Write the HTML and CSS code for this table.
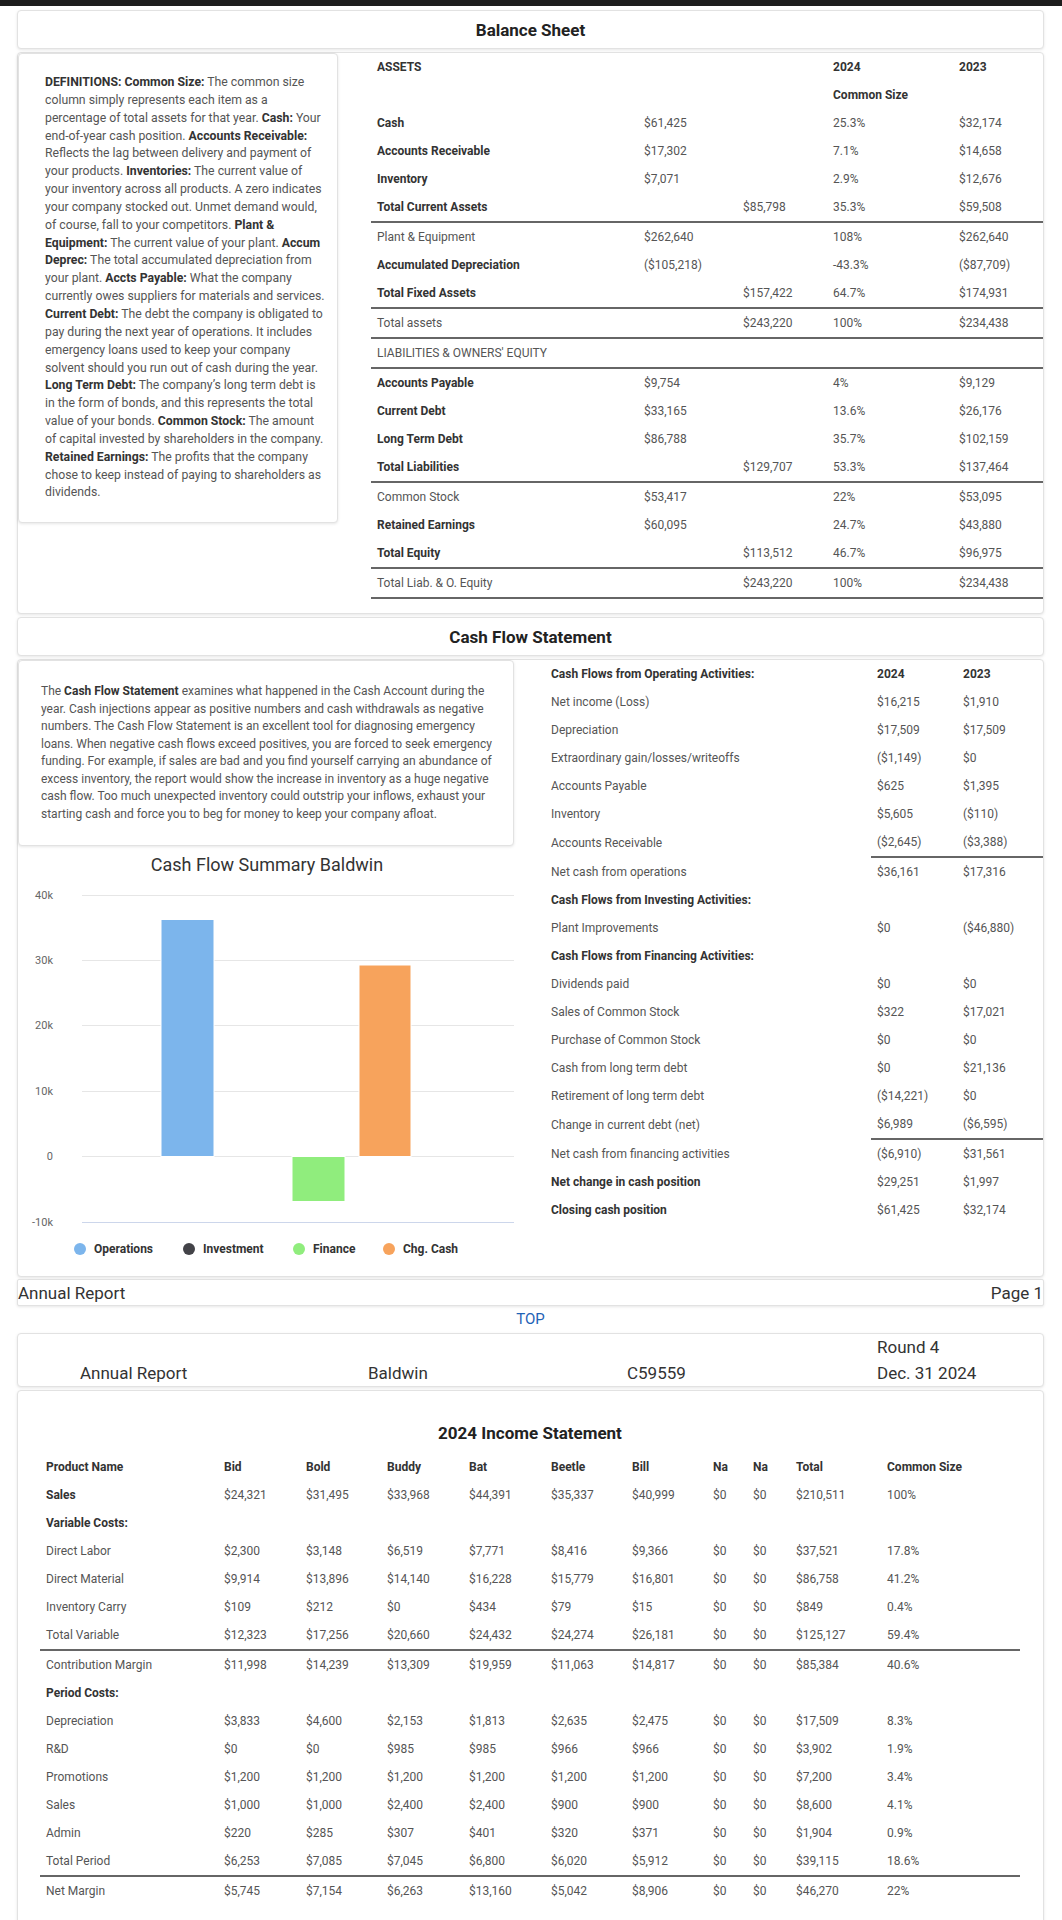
FILE: index.html
```html
<!DOCTYPE html>
<html lang="en">
<head>
<meta charset="utf-8">
<title>Annual Report - Baldwin</title>
<link rel="stylesheet" href="styles.css">
</head>
<body>
<div class="topbar"></div>
<div class="page">
  <div class="card titlecard first">Balance Sheet</div>
  <div class="card outer bs-outer">
    <div class="card defs">
      <b>DEFINITIONS: Common Size:</b> The common size<br>
      column simply represents each item as a<br>
      percentage of total assets for that year. <b>Cash:</b> Your<br>
      end-of-year cash position. <b>Accounts Receivable:</b><br>
      Reflects the lag between delivery and payment of<br>
      your products. <b>Inventories:</b> The current value of<br>
      your inventory across all products. A zero indicates<br>
      your company stocked out. Unmet demand would,<br>
      of course, fall to your competitors. <b>Plant &amp;</b><br>
      <b>Equipment:</b> The current value of your plant. <b>Accum</b><br>
      <b>Deprec:</b> The total accumulated depreciation from<br>
      your plant. <b>Accts Payable:</b> What the company<br>
      currently owes suppliers for materials and services.<br>
      <b>Current Debt:</b> The debt the company is obligated to<br>
      pay during the next year of operations. It includes<br>
      emergency loans used to keep your company<br>
      solvent should you run out of cash during the year.<br>
      <b>Long Term Debt:</b> The company’s long term debt is<br>
      in the form of bonds, and this represents the total<br>
      value of your bonds. <b>Common Stock:</b> The amount<br>
      of capital invested by shareholders in the company.<br>
      <b>Retained Earnings:</b> The profits that the company<br>
      chose to keep instead of paying to shareholders as<br>
      dividends.
    </div>
    <table class="fin bs">
      <colgroup><col class="c1"><col class="c2"><col class="c3"><col class="c4"><col class="c5"></colgroup>
      <tr class="b"><td>ASSETS</td><td></td><td></td><td>2024</td><td>2023</td></tr>
      <tr class="b"><td></td><td></td><td></td><td>Common Size</td><td></td></tr>
      <tr><td class="b">Cash</td><td>$61,425</td><td></td><td>25.3%</td><td>$32,174</td></tr>
      <tr><td class="b">Accounts Receivable</td><td>$17,302</td><td></td><td>7.1%</td><td>$14,658</td></tr>
      <tr><td class="b">Inventory</td><td>$7,071</td><td></td><td>2.9%</td><td>$12,676</td></tr>
      <tr class="sep"><td class="b">Total Current Assets</td><td></td><td>$85,798</td><td>35.3%</td><td>$59,508</td></tr>
      <tr><td>Plant &amp; Equipment</td><td>$262,640</td><td></td><td>108%</td><td>$262,640</td></tr>
      <tr><td class="b">Accumulated Depreciation</td><td>($105,218)</td><td></td><td>-43.3%</td><td>($87,709)</td></tr>
      <tr class="sep"><td class="b">Total Fixed Assets</td><td></td><td>$157,422</td><td>64.7%</td><td>$174,931</td></tr>
      <tr class="sep"><td>Total assets</td><td></td><td>$243,220</td><td>100%</td><td>$234,438</td></tr>
      <tr class="sep"><td>LIABILITIES &amp; OWNERS' EQUITY</td><td></td><td></td><td></td><td></td></tr>
      <tr><td class="b">Accounts Payable</td><td>$9,754</td><td></td><td>4%</td><td>$9,129</td></tr>
      <tr><td class="b">Current Debt</td><td>$33,165</td><td></td><td>13.6%</td><td>$26,176</td></tr>
      <tr><td class="b">Long Term Debt</td><td>$86,788</td><td></td><td>35.7%</td><td>$102,159</td></tr>
      <tr class="sep"><td class="b">Total Liabilities</td><td></td><td>$129,707</td><td>53.3%</td><td>$137,464</td></tr>
      <tr><td>Common Stock</td><td>$53,417</td><td></td><td>22%</td><td>$53,095</td></tr>
      <tr><td class="b">Retained Earnings</td><td>$60,095</td><td></td><td>24.7%</td><td>$43,880</td></tr>
      <tr class="sep"><td class="b">Total Equity</td><td></td><td>$113,512</td><td>46.7%</td><td>$96,975</td></tr>
      <tr class="sep"><td>Total Liab. &amp; O. Equity</td><td></td><td>$243,220</td><td>100%</td><td>$234,438</td></tr>
    </table>
  </div>

  <div class="card titlecard">Cash Flow Statement</div>
  <div class="card outer cf-outer">
    <div class="cf-left">
      <div class="card cftext">
        The <b>Cash Flow Statement</b> examines what happened in the Cash Account during the<br>
        year. Cash injections appear as positive numbers and cash withdrawals as negative<br>
        numbers. The Cash Flow Statement is an excellent tool for diagnosing emergency<br>
        loans. When negative cash flows exceed positives, you are forced to seek emergency<br>
        funding. For example, if sales are bad and you find yourself carrying an abundance of<br>
        excess inventory, the report would show the increase in inventory as a huge negative<br>
        cash flow. Too much unexpected inventory could outstrip your inflows, exhaust your<br>
        starting cash and force you to beg for money to keep your company afloat.
      </div>
      <svg class="chart" width="496" height="425" viewBox="0 0 496 425">
        <text x="249" y="20" text-anchor="middle" class="ch-title">Cash Flow Summary Baldwin</text>
        <g stroke="#e6e6e6" stroke-width="1">
          <line x1="64" x2="604" y1="44.5" y2="44.5"/>
          <line x1="64" x2="604" y1="109.5" y2="109.5"/>
          <line x1="64" x2="604" y1="174.5" y2="174.5"/>
          <line x1="64" x2="604" y1="240.5" y2="240.5"/>
          <line x1="64" x2="604" y1="305.5" y2="305.5"/>
        </g>
        <line x1="64" x2="604" y1="371.5" y2="371.5" stroke="#ccd6eb" stroke-width="1"/>
        <g class="ax" text-anchor="end">
          <text x="35" y="48">40k</text>
          <text x="35" y="113">30k</text>
          <text x="35" y="178">20k</text>
          <text x="35" y="244">10k</text>
          <text x="35" y="309">0</text>
          <text x="35" y="375">-10k</text>
        </g>
        <rect x="143" y="68.5" width="53" height="237" fill="#7cb5ec" stroke="#fff" stroke-width="1"/>
        <rect x="274" y="305.5" width="53" height="45" fill="#90ed7d" stroke="#fff" stroke-width="1"/>
        <rect x="341" y="114" width="52" height="191.5" fill="#f7a35c" stroke="#fff" stroke-width="1"/>
        <g class="lg">
          <circle cx="62" cy="398" r="6" fill="#7cb5ec"/>
          <text x="76" y="402">Operations</text>
          <circle cx="171" cy="398" r="6" fill="#434348"/>
          <text x="185" y="402">Investment</text>
          <circle cx="281" cy="398" r="6" fill="#90ed7d"/>
          <text x="295" y="402">Finance</text>
          <circle cx="371" cy="398" r="6" fill="#f7a35c"/>
          <text x="385" y="402">Chg. Cash</text>
        </g>
      </svg>
    </div>
    <table class="fin cf">
      <colgroup><col class="d1"><col class="d2"><col class="d3"></colgroup>
      <tr class="b"><td>Cash Flows from Operating Activities:</td><td>2024</td><td>2023</td></tr>
      <tr><td>Net income (Loss)</td><td>$16,215</td><td>$1,910</td></tr>
      <tr><td>Depreciation</td><td>$17,509</td><td>$17,509</td></tr>
      <tr><td>Extraordinary gain/losses/writeoffs</td><td>($1,149)</td><td>$0</td></tr>
      <tr><td>Accounts Payable</td><td>$625</td><td>$1,395</td></tr>
      <tr><td>Inventory</td><td>$5,605</td><td>($110)</td></tr>
      <tr class="vsep"><td>Accounts Receivable</td><td>($2,645)</td><td>($3,388)</td></tr>
      <tr><td>Net cash from operations</td><td>$36,161</td><td>$17,316</td></tr>
      <tr><td class="b">Cash Flows from Investing Activities:</td><td></td><td></td></tr>
      <tr><td>Plant Improvements</td><td>$0</td><td>($46,880)</td></tr>
      <tr><td class="b">Cash Flows from Financing Activities:</td><td></td><td></td></tr>
      <tr><td>Dividends paid</td><td>$0</td><td>$0</td></tr>
      <tr><td>Sales of Common Stock</td><td>$322</td><td>$17,021</td></tr>
      <tr><td>Purchase of Common Stock</td><td>$0</td><td>$0</td></tr>
      <tr><td>Cash from long term debt</td><td>$0</td><td>$21,136</td></tr>
      <tr><td>Retirement of long term debt</td><td>($14,221)</td><td>$0</td></tr>
      <tr class="vsep"><td>Change in current debt (net)</td><td>$6,989</td><td>($6,595)</td></tr>
      <tr><td>Net cash from financing activities</td><td>($6,910)</td><td>$31,561</td></tr>
      <tr><td class="b">Net change in cash position</td><td>$29,251</td><td>$1,997</td></tr>
      <tr><td class="b">Closing cash position</td><td>$61,425</td><td>$32,174</td></tr>
    </table>
  </div>

  <div class="card pagefoot"><span>Annual Report</span><span>Page 1</span></div>
  <div class="toplink"><a href="#">TOP</a></div>

  <div class="card pagehead">
    <div>Annual Report</div>
    <div>Baldwin</div>
    <div>C59559</div>
    <div class="last">Round 4<br>Dec. 31 2024</div>
  </div>

  <div class="card income">
    <div class="inc-title">2024 Income Statement</div>
    <table class="fin inc">
      <colgroup><col class="e1"><col class="e2"><col class="e3"><col class="e4"><col class="e5"><col class="e6"><col class="e7"><col class="e8"><col class="e9"><col class="e10"><col class="e11"></colgroup>
      <tr class="b"><td>Product Name</td><td>Bid</td><td>Bold</td><td>Buddy</td><td>Bat</td><td>Beetle</td><td>Bill</td><td>Na</td><td>Na</td><td>Total</td><td>Common Size</td></tr>
      <tr><td class="b">Sales</td><td>$24,321</td><td>$31,495</td><td>$33,968</td><td>$44,391</td><td>$35,337</td><td>$40,999</td><td>$0</td><td>$0</td><td>$210,511</td><td>100%</td></tr>
      <tr><td class="b">Variable Costs:</td><td></td><td></td><td></td><td></td><td></td><td></td><td></td><td></td><td></td><td></td></tr>
      <tr><td>Direct Labor</td><td>$2,300</td><td>$3,148</td><td>$6,519</td><td>$7,771</td><td>$8,416</td><td>$9,366</td><td>$0</td><td>$0</td><td>$37,521</td><td>17.8%</td></tr>
      <tr><td>Direct Material</td><td>$9,914</td><td>$13,896</td><td>$14,140</td><td>$16,228</td><td>$15,779</td><td>$16,801</td><td>$0</td><td>$0</td><td>$86,758</td><td>41.2%</td></tr>
      <tr><td>Inventory Carry</td><td>$109</td><td>$212</td><td>$0</td><td>$434</td><td>$79</td><td>$15</td><td>$0</td><td>$0</td><td>$849</td><td>0.4%</td></tr>
      <tr class="sep"><td>Total Variable</td><td>$12,323</td><td>$17,256</td><td>$20,660</td><td>$24,432</td><td>$24,274</td><td>$26,181</td><td>$0</td><td>$0</td><td>$125,127</td><td>59.4%</td></tr>
      <tr><td>Contribution Margin</td><td>$11,998</td><td>$14,239</td><td>$13,309</td><td>$19,959</td><td>$11,063</td><td>$14,817</td><td>$0</td><td>$0</td><td>$85,384</td><td>40.6%</td></tr>
      <tr><td class="b">Period Costs:</td><td></td><td></td><td></td><td></td><td></td><td></td><td></td><td></td><td></td><td></td></tr>
      <tr><td>Depreciation</td><td>$3,833</td><td>$4,600</td><td>$2,153</td><td>$1,813</td><td>$2,635</td><td>$2,475</td><td>$0</td><td>$0</td><td>$17,509</td><td>8.3%</td></tr>
      <tr><td>R&amp;D</td><td>$0</td><td>$0</td><td>$985</td><td>$985</td><td>$966</td><td>$966</td><td>$0</td><td>$0</td><td>$3,902</td><td>1.9%</td></tr>
      <tr><td>Promotions</td><td>$1,200</td><td>$1,200</td><td>$1,200</td><td>$1,200</td><td>$1,200</td><td>$1,200</td><td>$0</td><td>$0</td><td>$7,200</td><td>3.4%</td></tr>
      <tr><td>Sales</td><td>$1,000</td><td>$1,000</td><td>$2,400</td><td>$2,400</td><td>$900</td><td>$900</td><td>$0</td><td>$0</td><td>$8,600</td><td>4.1%</td></tr>
      <tr><td>Admin</td><td>$220</td><td>$285</td><td>$307</td><td>$401</td><td>$320</td><td>$371</td><td>$0</td><td>$0</td><td>$1,904</td><td>0.9%</td></tr>
      <tr class="sep"><td>Total Period</td><td>$6,253</td><td>$7,085</td><td>$7,045</td><td>$6,800</td><td>$6,020</td><td>$5,912</td><td>$0</td><td>$0</td><td>$39,115</td><td>18.6%</td></tr>
      <tr><td>Net Margin</td><td>$5,745</td><td>$7,154</td><td>$6,263</td><td>$13,160</td><td>$5,042</td><td>$8,906</td><td>$0</td><td>$0</td><td>$46,270</td><td>22%</td></tr>
    </table>
  </div>
</div>
</body>
</html>
```

FILE: styles.css
```css
* { box-sizing: border-box; }
html, body { margin: 0; padding: 0; background: #fff; }
body {
  width: 1062px;
  font-family: Roboto, "Noto Sans", "Liberation Sans", Arial, sans-serif;
  color: #555;
  font-size: 12px;
}
b, .b { font-weight: 700; color: #333; }

.topbar { height: 6px; background: #1d1d1d; }
.page { padding: 0 18px 0 17px; }

.card {
  background: #fff;
  border: 1px solid #e2e2e2;
  border-radius: 4px;
  box-shadow: 0 1px 3px rgba(0, 0, 0, 0.10);
}

.titlecard {
  margin-top: 3px;
  height: 39px;
  display: flex;
  align-items: center;
  justify-content: center;
  font-size: 17px;
  font-weight: 700;
  color: #222;
}
.titlecard.first { margin-top: 4px; }

.outer { margin-top: 3px; display: flex; align-items: flex-start; }
.bs-outer { padding-bottom: 14px; }

.defs {
  width: 320px;
  flex: none;
  padding: 20px 6px 20px 26px;
  font-size: 12.25px;
  line-height: 17.85px;
  color: #555;
  white-space: nowrap;
}

table.fin {
  border-collapse: separate;
  border-spacing: 0;
  table-layout: fixed;
  font-size: 12px;
  color: #555;
}
table.fin td {
  padding: 5px 6px;
  line-height: 18px;
  height: 28px;
  white-space: nowrap;
  vertical-align: middle;
}
table.fin tr.b td { font-weight: 700; color: #333; }
table.fin tr.sep td { border-bottom: 2px solid #666; }
table.fin tr.vsep td + td { border-bottom: 2px solid #666; }

.bs { margin-left: auto; width: 672px; }
.bs .c1 { width: 267px; }
.bs .c2 { width: 99px; }
.bs .c3 { width: 90px; }
.bs .c4 { width: 126px; }
.bs .c5 { width: 90px; }

.cf-left { width: 496px; flex: none; display: flex; flex-direction: column; }
.cftext {
  padding: 22px 8px 22px 22px;
  font-size: 12px;
  line-height: 17.5px;
  color: #555;
  white-space: nowrap;
}
.chart { display: block; margin-top: 5px; font-family: Roboto, "Noto Sans", Arial, sans-serif; }
.ch-title { font-size: 18px; fill: #333; }
.ax text { font-size: 11px; fill: #666; }
.lg text { font-size: 12px; font-weight: 700; fill: #333; }

.cf { margin-left: auto; width: 498px; }
.cf .d1 { width: 326px; }
.cf .d2 { width: 86px; }
.cf .d3 { width: 86px; }

.pagefoot {
  margin-top: 2px;
  height: 27px;
  display: flex;
  justify-content: space-between;
  align-items: center;
  font-size: 17px;
  color: #333;
  border-radius: 2px;
}
.toplink {
  height: 26px;
  line-height: 26px;
  text-align: center;
  font-size: 15px;
}
.toplink a { color: #1f63b6; text-decoration: none; }

.pagehead {
  margin-top: 1px;
  display: grid;
  grid-template-columns: 288px 259px 250px 1fr;
  padding-left: 62px;
  font-size: 17px;
  line-height: 26px;
  color: #333;
  align-items: end;
}

.income {
  margin-top: 3px;
  padding: 30px 23px 30px 22px;
}
.inc-title {
  text-align: center;
  font-size: 17px;
  font-weight: 700;
  color: #222;
  line-height: 24px;
  margin-bottom: 8px;
}
.inc { width: 980px; }
.inc .e1 { width: 178px; }
.inc .e2 { width: 82px; }
.inc .e3 { width: 81px; }
.inc .e4 { width: 82px; }
.inc .e5 { width: 82px; }
.inc .e6 { width: 81px; }
.inc .e7 { width: 81px; }
.inc .e8 { width: 40px; }
.inc .e9 { width: 43px; }
.inc .e10 { width: 91px; }
.inc .e11 { width: 139px; }
```
